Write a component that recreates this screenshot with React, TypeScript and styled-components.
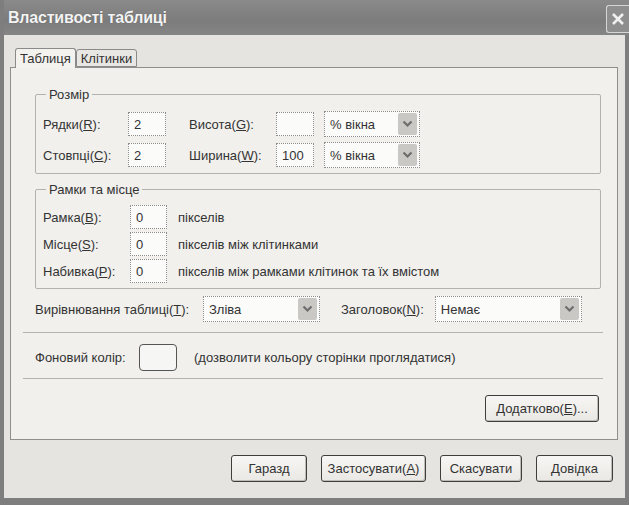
import React from "react";
import styled, {createGlobalStyle} from "styled-components";

const Global = createGlobalStyle`
    html, body {
        margin: 0;
        padding: 0;
        background: #d8d6d2;
    }
    body {
        font-family: "Liberation Sans", "DejaVu Sans", sans-serif;
        font-size: 13px;
        color: #333;
    }
`;

const Window = styled.div`
    width: 629px;
    height: 505px;
    box-sizing: border-box;
    display: flex;
    flex-direction: column;
    background: #7e7e7e;
    padding: 0 4px 7px 4px;
`;

const TitleBar = styled.div`
    height: 35px;
    flex: 0 0 auto;
    display: flex;
    align-items: center;
    justify-content: space-between;
    padding: 0 0 0 4px;
    margin-right: -4px;
    background: linear-gradient(#8a8a8a, #7c7c7c 60%, #858585);
`;

const Title = styled.div`
    font-weight: bold;
    font-size: 16px;
    color: #f4f4f4;
    letter-spacing: -0.2px;
    text-shadow: 0 0 1px #555;
`;

const CloseBtn = styled.div`
    width: 22px;
    height: 26px;
    border: 1px solid #d6d6d6;
    border-right: none;
    border-radius: 3px 0 0 3px;
    background: #8e8e8e;
    display: flex;
    align-items: center;
    justify-content: center;
    margin-top: 2px;
`;

const Body = styled.div`
    flex: 1;
    background: #e6e4e0;
    display: flex;
    flex-direction: column;
    padding: 12px 7px 0 6px;
`;

const Tabs = styled.div`
    display: flex;
    align-items: flex-end;
    height: 20px;
    padding-left: 5px;
`;

const Tab = styled.div<{ $active?: boolean }>`
    height: ${p => p.$active ? 20 : 18}px;
    box-sizing: border-box;
    padding: 0 4px;
    display: flex;
    align-items: center;
    border: 1px solid #8a8a8a;
    border-bottom: ${p => p.$active ? "none" : "1px solid #8a8a8a"};
    border-radius: 3px 3px 0 0;
    background: ${p => p.$active ? "#f3f2ef" : "#e9e7e3"};
    margin-bottom: ${p => p.$active ? "-1px" : "0"};
    position: relative;
    z-index: ${p => p.$active ? 1 : 0};
`;

const Panel = styled.div`
    height: 373px;
    box-sizing: border-box;
    border: 1px solid #8e8e8e;
    background: #f1f0ed;
    padding: 19px 16px 0 24px;
    display: flex;
    flex-direction: column;
`;

const Group = styled.fieldset<{ $mt?: number; $pt: number }>`
    margin: ${p => p.$mt ?? 0}px 0 0 0;
    padding: ${p => p.$pt}px 0 5px 7px;
    border: 1px solid #b4b2ae;
    border-radius: 2px;
    min-width: 0;
`;

const Legend = styled.legend`
    padding: 0 3px;
    margin-left: 3px;
`;

const SizeGrid = styled.div`
    display: grid;
    grid-template-columns: 85px 38px 23px 87px 38px 10px 96px;
    grid-auto-rows: 26px;
    row-gap: 5px;
    align-items: center;
`;

const FrameGrid = styled.div`
    display: grid;
    grid-template-columns: 87px 37px 11px auto;
    grid-auto-rows: 24px;
    row-gap: 3px;
    align-items: center;
`;

const Input = styled.div`
    height: 24px;
    box-sizing: border-box;
    border: 1px dotted #8c8c8c;
    background: #fbfbfa;
    padding: 0 5px;
    display: flex;
    align-items: center;
`;

const SelectBox = styled.div<{ $w: number }>`
    width: ${p => p.$w}px;
    height: 26px;
    box-sizing: border-box;
    border: 1px dotted #8c8c8c;
    background: #fbfbfa;
    display: flex;
    align-items: center;
    justify-content: space-between;
    padding-left: 5px;
`;

const Arrow = styled.div`
    width: 19px;
    height: 22px;
    margin-right: 2px;
    background: #c9c8c5;
    border-radius: 2px;
    display: flex;
    align-items: center;
    justify-content: center;
`;

const Gap = styled.span``;

const Row = styled.div<{ $mt?: number }>`
    display: flex;
    align-items: center;
    margin-top: ${p => p.$mt ?? 0}px;
`;

const Label = styled.span<{ $w?: number; $ml?: number; $mr?: number }>`
    ${p => p.$w ? `width: ${p.$w}px;` : ""}
    margin: 0 ${p => p.$mr ?? 0}px 0 ${p => p.$ml ?? 0}px;
    flex: 0 0 auto;
`;

const Separator = styled.div<{ $mt: number }>`
    height: 0;
    border-top: 1px solid #b4b2ae;
    margin: ${p => p.$mt}px -2px 0 -12px;
`;

const ColorBox = styled.div`
    width: 38px;
    height: 27px;
    box-sizing: border-box;
    border: 1px solid #555;
    border-radius: 4px;
    background: #f6f6f4;
    margin-right: 17px;
`;

const Button = styled.div<{ $w: number }>`
    width: ${p => p.$w}px;
    height: 27px;
    box-sizing: border-box;
    border: 1px solid #3e3e3e;
    border-radius: 3px;
    background: linear-gradient(#f7f6f4, #e9e8e4);
    box-shadow: inset -1px -1px 0 #bdbcb8;
    display: flex;
    align-items: center;
    justify-content: center;
`;

const RightRow = styled.div<{ $mt: number; $pr: number }>`
    display: flex;
    justify-content: flex-end;
    gap: 14px;
    margin-top: ${p => p.$mt}px;
    padding-right: ${p => p.$pr}px;
`;

const Chevron = () => (
    <svg width="11" height="8" viewBox="0 0 11 8">
        <path d="M1.5 1.5 L5.5 5.5 L9.5 1.5" stroke="#6e6e6e" strokeWidth="2.2" fill="none"/>
    </svg>
);

const Select = ({w, value}: { w: number, value: string }) => (
    <SelectBox $w={w}>
        <span>{value}</span>
        <Arrow><Chevron/></Arrow>
    </SelectBox>
);

export default function App() {
    return <>
        <Global/>
        <Window>
            <TitleBar>
                <Title>Властивості таблиці</Title>
                <CloseBtn>
                    <svg width="14" height="14" viewBox="0 0 14 14">
                        <path d="M2 2 L12 12 M12 2 L2 12" stroke="#f0f0f0" strokeWidth="2.6"/>
                    </svg>
                </CloseBtn>
            </TitleBar>
            <Body>
                <Tabs>
                    <Tab $active>Таблиця</Tab>
                    <Tab>Клітинки</Tab>
                </Tabs>
                <Panel>
                    <Group $pt={9}>
                        <Legend>Розмір</Legend>
                        <SizeGrid>
                            <span>Рядки(<u>R</u>):</span>
                            <Input>2</Input>
                            <Gap/>
                            <span>Висота(<u>G</u>):</span>
                            <Input/>
                            <Gap/>
                            <Select w={96} value="% вікна"/>
                            <span>Стовпці(<u>C</u>):</span>
                            <Input>2</Input>
                            <Gap/>
                            <span>Ширина(<u>W</u>):</span>
                            <Input>100</Input>
                            <Gap/>
                            <Select w={96} value="% вікна"/>
                        </SizeGrid>
                    </Group>
                    <Group $mt={8} $pt={8}>
                        <Legend>Рамки та місце</Legend>
                        <FrameGrid>
                            <span>Рамка(<u>B</u>):</span>
                            <Input>0</Input>
                            <Gap/>
                            <span>пікселів</span>
                            <span>Місце(<u>S</u>):</span>
                            <Input>0</Input>
                            <Gap/>
                            <span>пікселів між клітинками</span>
                            <span>Набивка(<u>P</u>):</span>
                            <Input>0</Input>
                            <Gap/>
                            <span>пікселів між рамками клітинок та їх вмістом</span>
                        </FrameGrid>
                    </Group>
                    <Row $mt={7}>
                        <Label $w={168}>Вирівнювання таблиці(<u>T</u>):</Label>
                        <Select w={117} value="Зліва"/>
                        <Label $ml={21} $mr={11}>Заголовок(<u>N</u>):</Label>
                        <Select w={147} value="Немає"/>
                    </Row>
                    <Separator $mt={10}/>
                    <Row $mt={11}>
                        <Label $w={104}>Фоновий колір:</Label>
                        <ColorBox/>
                        <Label>(дозволити кольору сторінки проглядатися)</Label>
                    </Row>
                    <Separator $mt={7}/>
                    <RightRow $mt={16} $pr={2}>
                        <Button $w={114}>Додатково(<u>E</u>)...</Button>
                    </RightRow>
                </Panel>
                <RightRow $mt={15} $pr={5}>
                    <Button $w={76}>Гаразд</Button>
                    <Button $w={105}>Застосувати(<u>A</u>)</Button>
                    <Button $w={82}>Скасувати</Button>
                    <Button $w={77}>Довідка</Button>
                </RightRow>
            </Body>
        </Window>
    </>;
}
